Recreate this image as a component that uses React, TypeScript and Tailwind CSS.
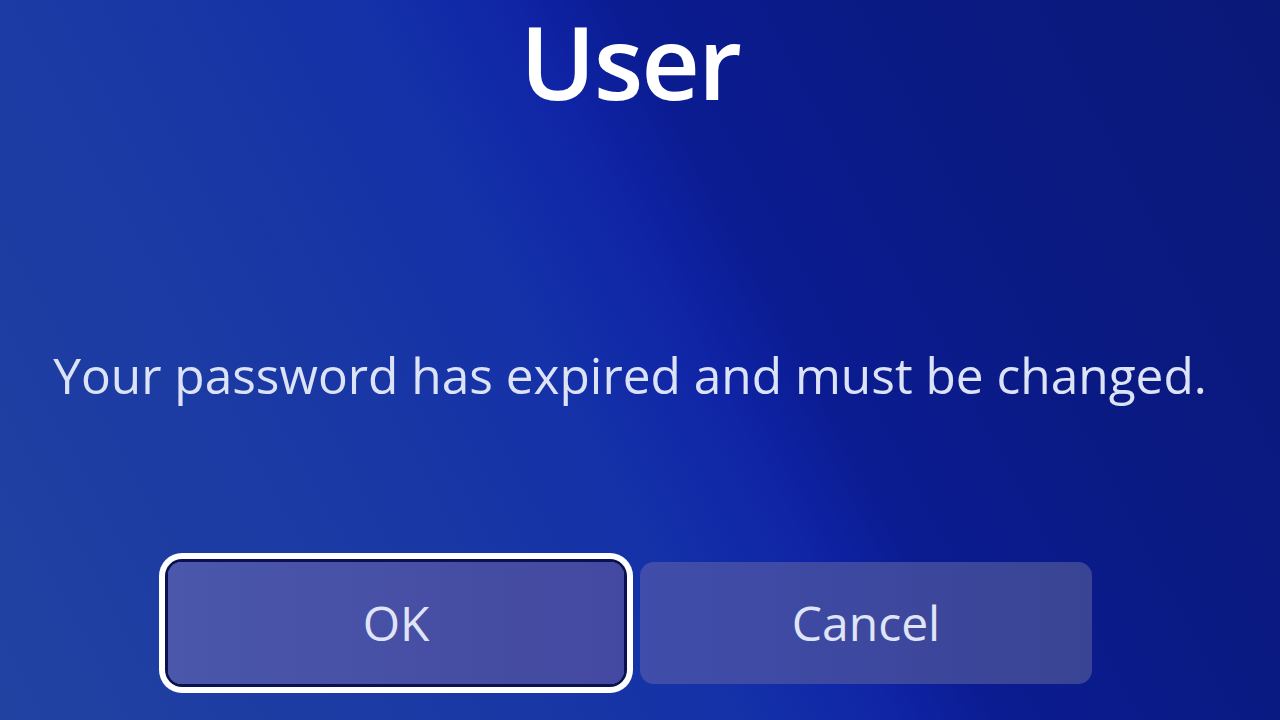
import React from "react";

export default function App() {
  return (
    <div
      className="relative w-[1280px] h-[720px] overflow-hidden"
      style={{
        background:
          "linear-gradient(62deg, #2242a2 0%, #1a38a4 30%, #1431a8 45%, #0f24a6 54%, #0b1c92 60%, #0a1a84 75%, #0a1878 100%)",
        fontFamily: '"Open Sans", "Noto Sans", sans-serif',
      }}
    >
      <div className="flex flex-col items-center w-full pr-[20px] pt-[4px]">
        <h1 className="text-[102px] leading-[1.12] font-semibold text-white tracking-[-2px]">
          User
        </h1>
        <p className="mt-[233px] text-[49.6px] leading-none font-medium text-[#dde3f6] whitespace-nowrap">
          Your password has expired and must be changed.
        </p>
        <div className="mt-[161px] flex gap-[16px]">
          <button className="w-[456px] h-[122px] rounded-[14px] bg-gradient-to-r from-[#4a57aa] to-[#4349a0] text-[48px] font-medium text-[#e0e4f7] shadow-[0_0_0_3px_#0b1150,0_0_0_9px_#ffffff] flex items-center justify-center">
            OK
          </button>
          <button className="w-[452px] h-[122px] rounded-[14px] bg-gradient-to-r from-[#404daa] to-[#3a4494] text-[48px] font-medium text-[#e0e4f7] flex items-center justify-center">
            Cancel
          </button>
        </div>
      </div>
    </div>
  );
}
